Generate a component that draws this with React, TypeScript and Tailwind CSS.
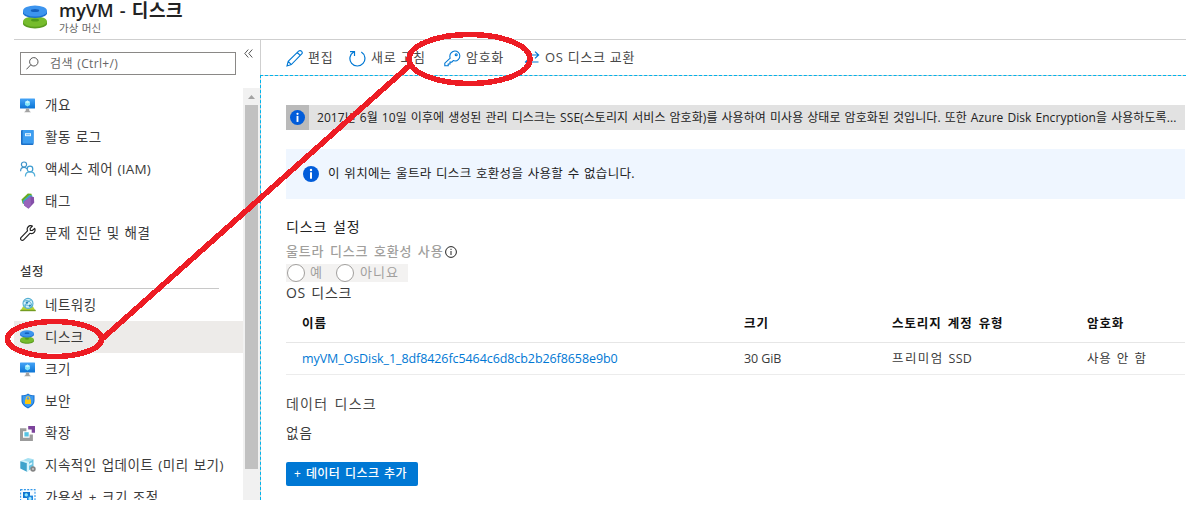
import type { ReactNode } from "react";

function DiskIcon({ className }: { className: string }) {
  return (
    <svg className={className} viewBox="0 0 24 24">
      <path d="M0 16.5v2.3c0 2.6 5.4 4.6 12 4.6s12-2 12-4.6v-2.3z" fill="#5a9c1f" />
      <ellipse cx="12" cy="16.5" rx="12" ry="5.2" fill="#76bc2d" />
      <ellipse cx="12" cy="15.2" rx="4" ry="1.4" fill="#4f9a1c" />
      <path d="M0 6v2.3c0 2.6 5.4 4.7 12 4.7s12-2.1 12-4.7V6z" fill="#1a6fd0" />
      <ellipse cx="12" cy="6" rx="12" ry="5.6" fill="#3c94ee" />
      <ellipse cx="12" cy="5.4" rx="4.2" ry="1.5" fill="#1560bd" />
    </svg>
  );
}

function MonitorIcon() {
  return (
    <svg className="size-[15px]" viewBox="0 0 15 15">
      <defs>
        <linearGradient id="screen" x1="0" y1="1" x2="0" y2="0">
          <stop offset="0" stopColor="#0b74d4" />
          <stop offset="1" stopColor="#45a4f7" />
        </linearGradient>
      </defs>
      <rect y="0.5" width="15" height="10" rx="0.5" fill="url(#screen)" />
      <path d="M6 10.5h3l.4 2.5 1.6 1.2H4L5.6 13z" fill="#a3a3a3" />
      <path d="M7.5 2.6 10 4v3L7.5 8.6 5 7V4z" fill="#7fe3fa" />
      <path d="M7.5 2.6 10 4 7.5 5.4 5 4z" fill="#c6f4fd" />
    </svg>
  );
}

function LogIcon() {
  return (
    <svg className="size-[15px]" viewBox="0 0 15 15">
      <rect x="1" y="0" width="12.5" height="15" rx="1" fill="#1c70c8" />
      <rect x="2.6" y="0" width="11" height="13.6" rx="0.6" fill="#3c9df0" />
      <rect x="5" y="3.2" width="6" height="3" fill="#e8f5ff" />
      <rect x="6" y="4.3" width="4" height="0.9" fill="#5bb0f2" />
    </svg>
  );
}

function PeopleIcon() {
  return (
    <svg className="size-[16px]" viewBox="0 0 16 16" fill="none" strokeWidth="1.2">
      <circle cx="4" cy="3.6" r="2.6" stroke="#3f93c8" />
      <path d="M.6 10.2C.6 7.8 2 6.4 4 6.4c1.3 0 2.3.5 2.9 1.4" stroke="#3f93c8" />
      <circle cx="10" cy="8" r="2.8" stroke="#3c9bd0" />
      <path d="M5.4 15.4c0-2.8 1.9-4.5 4.6-4.5s4.8 1.7 4.8 4.5" stroke="#55b0da" />
    </svg>
  );
}

function TagIcon() {
  return (
    <svg className="size-[16px]" viewBox="0 0 16 16">
      <path d="M1.5 6.6 7.8.6l3.700.2.500 4-6.200 6.600-3.200-.8z" fill="#69ad1e" />
      <path d="M2.500 8 9.300 2l3 .6.400 4.400-5.700 5.300L3.400 11z" fill="#3fa4c9" />
      <path d="M3.800 9 10.500 3.400l3.400.6.300 5.700-5.700 6-4.300-3.200z" fill="#8450a8" />
      <path d="m3.800 9 6.700-5.600.3 8.600-2.600 3.200-4-2.700z" fill="#9965bb" />
    </svg>
  );
}

function WrenchIcon() {
  return (
    <svg className="size-[16px]" viewBox="0 0 16 16" fill="none" stroke="#222" strokeWidth="1.2" strokeLinejoin="round">
      <path d="M14.7 3.4 12.3 5.5 10.3 5.3 10.2 3.3 12.4 1.1C10.600.2 8.500.9 7.600 2.600c-.6 1.200-.5 2.200-.1 3.200L1.200 12.300c-.8.8-.8 1.800-.1 2.500s1.800.7 2.500 0l6.300-6.500c1.700.6 3.400.2 4.400-1.100.9-1.200.9-2.600.4-3.800z" />
    </svg>
  );
}

function NetworkIcon() {
  return (
    <svg className="size-[16px]" viewBox="0 0 16 16">
      <path d="M3 9.500h10l2.700 4.500H.3z" fill="#b5d334" />
      <path d="M.3 12.800h15.400v1.400H.3z" fill="#739c20" />
      <circle cx="8" cy="6.400" r="5" fill="#d5f0fa" stroke="#55afd2" strokeWidth="1.100" />
      <path d="M4 4.400c3-1.700 5-.5 6.500 1.200s1.700 3.700 1 5.200M5.500 10.500C5 8 6 5 10.700 3.500M4 8.200c2.600-.7 5.500.2 6.500 2.500" stroke="#4caacb" strokeWidth="0.900" fill="none" />
      <circle cx="7" cy="5.600" r="1.200" fill="#2d83b8" />
      <circle cx="10" cy="8.600" r="1.100" fill="#2d83b8" />
    </svg>
  );
}

function ShieldIcon() {
  return (
    <svg className="size-[16px]" viewBox="0 0 16 16">
      <path d="M8 .4c2 1.600 4 1.900 6.500 1.900v5.300c0 4-3 6.200-6.500 8-3.500-1.800-6.500-4-6.500-8V2.300C4 2.300 6 2 8 .4z" fill="#1570cf" />
      <path d="M8 1.600c1.700 1.200 3.500 1.600 5.500 1.700v4.300c0 3.300-2.500 5.200-5.500 6.800-3-1.600-5.500-3.500-5.500-6.800V3.300C4.500 3.200 6.300 2.800 8 1.600z" fill="#3c9af0" />
      <path d="M6.200 7V5.600a1.800 1.800 0 0 1 3.600 0V7" fill="none" stroke="#f4cb3e" strokeWidth="1.100" />
      <rect x="5" y="6.600" width="6" height="4.400" rx="0.500" fill="#fdc70e" />
    </svg>
  );
}

function ExtensionIcon() {
  return (
    <svg className="size-[15px]" viewBox="0 0 15 15">
      <path d="M0 2.300h6.400v3H3v6.500h6.600V8.600h3.300V15H0z" fill="#9b9b9b" />
      <rect x="4.400" y="6.200" width="4.300" height="4.300" fill="#55c3e3" />
      <path d="M8.200 0H15v6.700h-3.300V3.400H8.200z" fill="#7c439b" />
    </svg>
  );
}

function UpdateIcon() {
  return (
    <svg className="size-[16px]" viewBox="0 0 16 16">
      <path d="M.3 4.300 8 1l5.500 1.300-6.600 3.800z" fill="#a5e0f2" />
      <path d="M.3 4.300 6.900 6v8.800L.3 11.500z" fill="#3fa3cc" />
      <path d="m6.900 6 6.600-3.700v8L6.900 14.800z" fill="#69c3e2" />
      <path d="M3 3.200 9 5v9l-2.100.8V6L1.500 3.900z" fill="#d8f4fb" />
      <path d="m9.200 6.800 3-1.600v2l-3 1.600z" fill="#e3f7fc" />
      <circle cx="13" cy="12" r="2.700" fill="#858585" />
      <circle cx="13" cy="12" r="0.900" fill="#d2d2d2" />
    </svg>
  );
}

function ScaleIcon() {
  return (
    <svg className="size-[16px]" viewBox="0 0 16 16">
      <rect x=".6" y=".6" width="14.400" height="14.400" fill="#f6fbff" stroke="#3498e8" strokeWidth="1.100" strokeDasharray="2 1.300" />
      <rect x="3" y="3" width="7" height="6" fill="#0d74d0" />
      <rect x="7" y="6.600" width="6" height="6" fill="#1f87e0" />
      <path d="m6.200 4 1.600 1v1.800l-1.600.9-1.500-.9V5z" fill="#8be4f8" />
      <path d="m10 7.800 1.500 1v1.600l-1.500.9-1.500-.9V8.800z" fill="#a9ecfb" />
    </svg>
  );
}

function InfoIcon({ className }: { className: string }) {
  return (
    <svg className={className} viewBox="0 0 16 16">
      <circle cx="8" cy="8" r="8" fill="#015cda" />
      <circle cx="8" cy="4" r="1.200" fill="#fff" />
      <rect x="7" y="6.300" width="2" height="6.400" fill="#fff" />
    </svg>
  );
}

function NavItem({ icon, label, active, className = "" }: { icon: ReactNode; label: string; active?: boolean; className?: string }) {
  return (
    <li className={`flex h-8 shrink-0 items-center pl-1.5 ${active ? "bg-[#edebe9]" : ""}`}>
      <span className="flex w-[25px] shrink-0 items-center">{icon}</span>
      <span className={`whitespace-nowrap ${className}`}>{label}</span>
    </li>
  );
}

function Sidebar() {
  return (
    <aside className="flex w-[246px] shrink-0 flex-col">
      <div className="flex h-12 shrink-0 pl-1.5 pt-3">
        <div className="flex h-[23px] w-[216px] items-center border border-[#8a8886] pl-[5px] text-[12px] text-[#666]">
          <svg className="mr-[11px] size-[13px]" viewBox="0 0 13 13" fill="none" stroke="#555" strokeWidth="1">
            <circle cx="7.800" cy="4.800" r="4.200" />
            <path d="M4.800 7.800.4 12.400" />
          </svg>
          <span className="whitespace-nowrap tracking-[0.35px] [word-spacing:1px]">검색 (Ctrl+/)</span>
        </div>
        <svg className="ml-2 -mt-[3px] size-[9px]" viewBox="0 0 9 9" fill="none" stroke="#555" strokeWidth="1">
          <path d="M4.300.5.800 4.500l3.500 4M8.300.5 4.800 4.500l3.500 4" />
        </svg>
      </div>
      <div className="flex min-h-0 flex-1">
        <nav className="min-w-0 flex-1 overflow-hidden pt-px text-[13.5px] tracking-[0.5px] text-[#3b3b3b] [word-spacing:1px]">
          <ul>
            <NavItem icon={<MonitorIcon />} label="개요" />
            <NavItem icon={<LogIcon />} label="활동 로그" />
            <NavItem icon={<PeopleIcon />} label="액세스 제어 (IAM)" className="tracking-[0.2px]" />
            <NavItem icon={<TagIcon />} label="태그" />
            <NavItem icon={<WrenchIcon />} label="문제 진단 및 해결" />
          </ul>
          <h2 className="ml-1.5 mr-6 flex h-[40px] items-end border-b border-[#c8c8c8] pb-[6px] text-[12.5px] font-medium tracking-[0.5px]">
            설정
          </h2>
          <ul>
            <NavItem icon={<NetworkIcon />} label="네트워킹" />
            <NavItem icon={<DiskIcon className="size-[14px]" />} label="디스크" active />
            <NavItem icon={<MonitorIcon />} label="크기" />
            <NavItem icon={<ShieldIcon />} label="보안" />
            <NavItem icon={<ExtensionIcon />} label="확장" />
            <NavItem icon={<UpdateIcon />} label="지속적인 업데이트 (미리 보기)" />
            <NavItem icon={<ScaleIcon />} label="가용성 + 크기 조정" />
          </ul>
        </nav>
        <div className="flex w-[17px] shrink-0 flex-col items-center bg-[#f1f1f1]">
          <svg className="h-[17px] w-[7px]" viewBox="0 0 7 17">
            <path d="M0 11h7L3.500 7z" fill="#a3a3a3" />
          </svg>
          <div className="h-[364px] w-[13px] bg-[#c1c1c1]" />
        </div>
      </div>
    </aside>
  );
}

function Toolbar() {
  return (
    <div className="flex h-[36px] shrink-0 items-center whitespace-nowrap border-b border-[#cfcfcf] pl-[25px] pt-px text-[13px] tracking-[0.7px] text-[#484848] [&_svg]:shrink-0">
      <svg className="mr-[5px] size-[17px]" viewBox="0 0 17 17" fill="none" stroke="#0078d4" strokeWidth="1.100">
        <path d="m1 16 1.200-4.700L12.600 1.200c1-.9 2.300-.7 3 .1.800.8.800 2-.1 2.900L5.300 14.600zM11.300 2.500l3.100 3.100M2.200 11.300l3.100 3.300" />
      </svg>
      <span className="w-[41px]">편집</span>
      <svg className="mr-[5px] size-[17px]" viewBox="0 0 17 17" fill="none" stroke="#0078d4" strokeWidth="1.200">
        <path d="M12.300 2.100A7.500 7.500 0 1 1 4.700 2M1 1.600h4.500v4.300" />
      </svg>
      <span className="w-[73px]">새로 고침</span>
      <svg className="mr-[5px] size-[17px]" viewBox="0 0 17 17" fill="none" stroke="#0078d4" strokeWidth="1.100">
        <path d="M6.200 8.200C5.600 6.500 5.900 4.200 7.300 2.700c1.900-2 5-2.100 7-.3s2 4.900.2 6.900c-1.400 1.500-3.600 2-5.300 1.300l-1.400 1.500H6v1.900H4.200v1.800H.8v-2.600z" />
        <circle cx="12.200" cy="4.800" r="1" />
      </svg>
      <span className="w-[58px]">암호화</span>
      <svg className="mr-[5px] h-[15px] w-[16px]" viewBox="0 0 16 15" fill="none" stroke="#0078d4" strokeWidth="1.200">
        <path d="M2 4h12.500M11 .6 14.600 4 11 7.400M14.500 11H1.500M5 7.600 1.500 11 5 14.400" />
      </svg>
      <span>OS 디스크 교환</span>
    </div>
  );
}

function DiskTable() {
  return (
    <table className="w-full table-fixed text-left text-[12.5px] text-[#3b3b3b]">
      <colgroup>
        <col className="w-[442px]" />
        <col className="w-[148px]" />
        <col className="w-[195px]" />
        <col />
      </colgroup>
      <thead>
        <tr className="h-[39px] border-b border-[#e6e6e6] tracking-[0.9px] text-[#111] [&>th]:pl-4 [&>th]:pt-[5px] [&>th]:font-bold [word-spacing:2px]">
          <th>이름</th>
          <th>크기</th>
          <th>스토리지 계정 유형</th>
          <th>암호화</th>
        </tr>
      </thead>
      <tbody>
        <tr className="h-8 border-b border-[#ececec] [&>td]:whitespace-nowrap [&>td]:pl-4 [&>td]:pt-[2px]">
          <td className="tracking-[-0.08px] text-[#0078d4]">myVM_OsDisk_1_8df8426fc5464c6d8cb2b26f8658e9b0</td>
          <td className="tracking-[-0.1px]">30 GiB</td>
          <td>
            <span className="mr-[5px] tracking-[1.4px]">프리미엄</span>
            <span className="tracking-[0.2px]">SSD</span>
          </td>
          <td className="tracking-[0.7px] [word-spacing:1.5px]">사용 안 함</td>
        </tr>
      </tbody>
    </table>
  );
}

function DisksPanel() {
  return (
    <main className="-ml-px -mt-px flex min-h-0 flex-1 flex-col border-l border-t border-dashed border-[#00b4ec] pl-[25px] pr-px pt-[29px]">
      <div className="flex h-[25px] shrink-0 items-center bg-[#e2e2e2] text-[12px] text-[#222]">
        <span className="mr-2 flex h-full w-[23px] items-center justify-center bg-[#bababa]">
          <InfoIcon className="size-[15px]" />
        </span>
        <span className="whitespace-nowrap tracking-[0.07px] [word-spacing:0.8px]">
          2017년 6월 10일 이후에 생성된 관리 디스크는 SSE(스토리지 서비스 암호화)를 사용하여 미사용 상태로 암호화된 것입니다. 또한 Azure Disk Encryption을 사용하도록...
        </span>
      </div>
      <div className="mt-[19px] flex h-[50px] shrink-0 items-center bg-[#eff6ff] pl-[17px] text-[12.5px] text-[#222]">
        <InfoIcon className="mr-2 size-4" />
        <span className="pl-px pt-px tracking-[0.3px] [word-spacing:1px]">이 위치에는 울트라 디스크 호환성을 사용할 수 없습니다.</span>
      </div>
      <h2 className="mt-[16px] h-[25px] text-[14px] leading-[23px] tracking-[0.9px] text-[#222] [word-spacing:1px]">디스크 설정</h2>
      <div className="flex h-6 items-center pb-px text-[13px] font-medium tracking-[0.8px] text-[#a19f9d] [word-spacing:1.5px]">
        울트라 디스크 호환성 사용
        <svg className="ml-[2px] size-3" viewBox="0 0 12 12" fill="none" stroke="#222" strokeWidth="1">
          <circle cx="6" cy="6" r="5.400" />
          <path d="M6 5v4M6 2.800V4" />
        </svg>
      </div>
      <div className="flex h-[18px] w-[122px] items-center bg-[#f3f2f1] pl-px text-[13px] tracking-[1px] text-[#a19f9d]">
        <span className="mr-[5px] size-[18px] shrink-0 rounded-full border border-[#a19f9d] bg-white" />
        <span className="w-[26px]">예</span>
        <span className="mr-[6px] size-[18px] shrink-0 rounded-full border border-[#a19f9d] bg-white" />
        <span>아니요</span>
      </div>
      <h3 className="h-[21px] text-[14px] leading-[21px] tracking-[0.7px] text-[#3b3b3b] [word-spacing:1px]">OS 디스크</h3>
      <DiskTable />
      <h3 className="mt-[17px] h-[23px] text-[14px] leading-[23px] tracking-[1.2px] text-[#484848] [word-spacing:1.5px]">데이터 디스크</h3>
      <p className="mt-[7px] h-[23px] text-[13.5px] leading-[23px] tracking-[1px] text-[#3b3b3b]">없음</p>
      <button className="mt-[17px] flex h-6 w-[132px] shrink-0 items-center rounded-[2px] bg-[#0078d4] pt-px pl-2 text-[12px] font-medium tracking-[0.45px] whitespace-nowrap text-white [word-spacing:1px]">
        + 데이터 디스크 추가
      </button>
    </main>
  );
}

function Annotations() {
  return (
    <svg className="pointer-events-none absolute inset-0" width="1186" height="529" fill="none" stroke="#ed1c24" strokeWidth="5.500" shapeRendering="crispEdges">
      <ellipse cx="469.500" cy="59" rx="60.500" ry="24.500" />
      <ellipse cx="54.500" cy="339" rx="47" ry="17.500" />
      <path d="M102 339 409 66" />
    </svg>
  );
}

export default function App() {
  return (
    <div className="relative h-[529px] w-[1186px] overflow-hidden bg-white font-['Open_Sans','Noto_Sans_CJK_KR',sans-serif]">
      <div className="flex h-[500px] flex-col pl-3.5">
        <header className="flex h-10 shrink-0 border-b border-[#cfcfcf] pl-[9px]">
          <DiskIcon className="mr-3 mt-[5px] size-6" />
          <div>
            <h1 className="h-[22px] whitespace-nowrap text-[18px] font-semibold leading-[21px] text-[#222] [word-spacing:1.5px]">
              myVM - <span className="tracking-[0.6px]">디스크</span>
            </h1>
            <p className="text-[10.5px] leading-3 tracking-[0.2px] text-[#666]">가상 머신</p>
          </div>
        </header>
        <div className="flex min-h-0 flex-1">
          <Sidebar />
          <div className="flex min-w-0 flex-1 flex-col border-l border-[#cfcfcf]">
            <Toolbar />
            <DisksPanel />
          </div>
        </div>
      </div>
      <Annotations />
    </div>
  );
}
